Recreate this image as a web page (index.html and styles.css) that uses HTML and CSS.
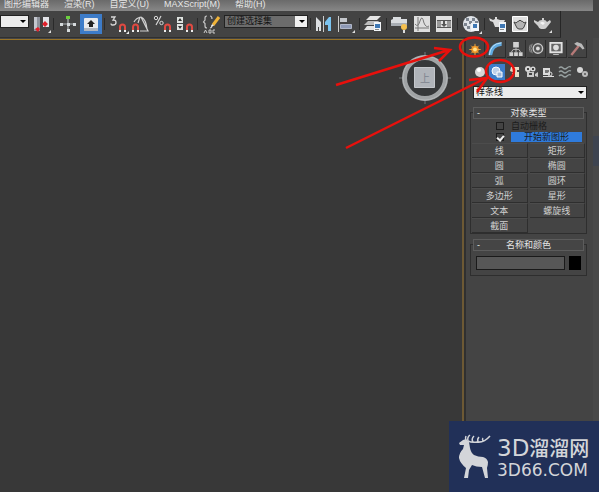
FILE: index.html
```html
<!DOCTYPE html>
<html lang="zh-CN">
<head>
    <meta charset="utf-8">
    <title>3ds Max</title>
    <link rel="stylesheet" href="styles.css">
</head>
<body>
    <div class="app">
        <nav class="menu-bar">
            <a href="#">图形编辑器</a>
            <a href="#">渲染(R)</a>
            <a href="#">自定义(U)</a>
            <a href="#">MAXScript(M)</a>
            <a href="#">帮助(H)</a>
        </nav>

        <div class="toolbar">
            <div class="select-box filter-box">
                <select aria-label="选择过滤器"><option></option></select>
            </div>
            <button class="tool" aria-label="书签">
                <svg viewBox="0 0 20 20"><path fill="#8f939c" d="M3 3h6v14H3z"/><path fill="#e3e4e8" d="M12 3h6v10h-6z"/><path fill="#c4c7ce" d="M3 3h3v12H3z"/><path fill="#e0202a" d="M4 15l3-2 2 2-2 3zM11 10l3-3 3 3-3 3z"/><path fill="#ddd" d="M20 16v3h-3z"/></svg>
            </button>
            <span class="sep"></span>
            <button class="tool" aria-label="操纵">
                <svg viewBox="0 0 20 20"><path stroke="#b4babd" stroke-width="1.2" d="M10 4v13M3 10h14"/><path fill="#d5dadc" d="M2 9h3v3H2zM15 9h3v3h-3zM9 15h3v3H9zM9 9h3v3H9z"/><path fill="#6ccf3e" d="M8 2h4v3H8z"/></svg>
            </button>
            <button class="tool active" aria-label="键盘快捷键覆盖">
                <svg viewBox="0 0 20 20"><rect x="3" y="4" width="14" height="13" rx="1" fill="#e8eaee"/><path fill="#aeb5c0" d="M3 14h14v3H3z"/><path fill="#222" d="M10 6l4 4h-2v3H8v-3H6z"/></svg>
            </button>
            <span class="sep"></span>
            <button class="tool" aria-label="捕捉开关">
                <svg viewBox="0 0 20 20"><path fill="none" stroke="#d8d8d8" stroke-width="1.3" d="M2 3h4L4 6q3 0 3 2.500T4 11Q2 11 2 9.500"/><path class="magnet" d="M11 17v-4a2.500 2.500 0 0 1 5 0v4"/><path fill="#eee" d="M10 16h2v2h-2zM15 16h2v2h-2zM20 17v3h-3z"/></svg>
            </button>
            <button class="tool" aria-label="角度捕捉">
                <svg viewBox="0 0 20 20"><path fill="none" stroke="#d0d0d0" stroke-width="1.200" d="M3 8Q5 4 10 3q5 2 6 12M10 3l7 14H9M9 3l-2 6"/><path class="magnet" d="M2 17v-4a2.500 2.500 0 0 1 5 0v4"/><path fill="#eee" d="M1 16h2v2H1zM6 16h2v2H6z"/></svg>
            </button>
            <button class="tool" aria-label="百分比捕捉">
                <svg viewBox="0 0 20 20"><path fill="none" stroke="#d8d8d8" stroke-width="1.200" d="M8 2L3 11"/><circle cx="3" cy="4" r="1.700" fill="none" stroke="#d8d8d8"/><circle cx="8.500" cy="9" r="1.700" fill="none" stroke="#d8d8d8"/><path class="magnet" d="M12 17v-4a2.500 2.500 0 0 1 5 0v4"/><path fill="#eee" d="M11 16h2v2h-2zM16 16h2v2h-2z"/></svg>
            </button>
            <button class="tool" aria-label="微调器捕捉">
                <svg viewBox="0 0 20 20"><path fill="#dfe3e0" d="M2 3h6v6H2zM2 10h6v6H2z"/><path fill="#333" d="M3 7l2-3 2 3zM3 12l2 3 2-3z"/><path class="magnet" d="M12 17v-4a2.500 2.500 0 0 1 5 0v4"/><path fill="#eee" d="M11 16h2v2h-2zM16 16h2v2h-2z"/></svg>
            </button>
            <span class="sep"></span>
            <button class="tool" aria-label="编辑命名选择集">
                <svg viewBox="0 0 20 20"><path fill="none" stroke="#c8c8c8" stroke-width="1.200" d="M5 2Q3 2 3 4v2L1.500 8 3 9.500V12q0 2 2 2M8 2q2 0 2 3M8 14q2 0 2-3"/><path stroke="#f0b43a" stroke-width="3" d="M17 3l-6 8"/><path fill="#eee" d="M9 13l1-3 2 1.500z"/><path fill="none" stroke="#ccc" d="M2 19l1.500-3 1.500 3M7 16v3h2v-3zM13 16h-2v3h2"/></svg>
            </button>
            <div class="select-box set-box">
                <select aria-label="命名选择集"><option>创建选择集</option></select>
            </div>
            <span class="sep"></span>
            <button class="tool" aria-label="镜像">
                <svg viewBox="0 0 20 20"><path fill="#dcdfe2" d="M1 3l5 5v9H4v-4H3v4H1z"/><path fill="#ccc" d="M8 2h1v16H8z"/><path fill="#7cc4f0" d="M16 3h-2l-4 5v3h3v6h3z"/></svg>
            </button>
            <button class="tool" aria-label="对齐">
                <svg viewBox="0 0 20 20"><path fill="#ccc" d="M1 2h1v16H1z"/><path fill="#c3c6cb" d="M3 4h7v4H3z"/><path fill="#8d98b4" stroke="#b0b6c8" d="M3.500 10.500h11v4h-11z"/><path fill="#ddd" d="M18 16v3h-3z"/></svg>
            </button>
            <span class="sep"></span>
            <button class="tool" aria-label="层管理器">
                <svg viewBox="0 0 20 20"><path fill="#e4e4e4" d="M6 2h11l-4 4H2z"/><path fill="#bdbdbd" d="M4 7h11l-3 4H0z"/><path fill="#e4e4e4" d="M3 12h10l-3 4H0z"/><path fill="#f2f5f8" d="M10 8h7v9h-7z"/><path fill="#3f78b4" d="M11 10h5v4h-5z"/><path fill="#888" d="M11 15h4v1h-4z"/></svg>
            </button>
            <span class="sep"></span>
            <button class="tool" aria-label="石墨建模工具">
                <svg viewBox="0 0 20 20"><path fill="#d9dcdf" d="M0 6l2-1V3h8v2h6v7H0z"/><path fill="#a8adb3" d="M0 9h16v3H0z"/><circle cx="13" cy="13" r="3" fill="#f5c04e"/><path fill="#ddd" d="M12 16h2v3h-2z"/></svg>
            </button>
            <button class="tool" aria-label="曲线编辑器">
                <svg viewBox="0 0 20 20"><path fill="#dedede" d="M1 2h16v16H1z"/><path fill="none" stroke="#777" d="M5 3v14M2 14h14M2 10q3 4 5-3t4 2q2 5 5 3"/></svg>
            </button>
            <button class="tool" aria-label="图解视图">
                <svg viewBox="0 0 20 20"><path fill="#e0e0e0" d="M1 2h16v16H1z"/><path fill="#555" d="M2 6h14v1H2zM2 13h14v1H2zM8 7h2v3h2l-3 3-3-3h2z"/><path fill="#999" d="M2 7h4v6H2zM12 7h4v6h-4z"/></svg>
            </button>
            <span class="sep"></span>
            <button class="tool" aria-label="材质编辑器">
                <svg viewBox="0 0 20 20"><circle cx="9" cy="10" r="8" fill="#dfe3e8"/><path fill="#7d8590" d="M4 4h3v3H4zM10 4h3v3h-3zM7 7h3v3H7zM13 7h3v3h-3zM2 9h3v3H2zM5 12h3v3H5z"/><path fill="#f2f5f8" d="M9 9h8v8H9z"/><path fill="#3f78b4" d="M11 10h4v4h-4z"/><path fill="#ddd" d="M20 17v3h-3z"/></svg>
            </button>
            <span class="sep"></span>
            <button class="tool" aria-label="渲染设置">
                <svg viewBox="0 0 20 20"><path fill="#dcdcdc" d="M0 4l4 2 2-1V3h2v2l3 1h5l-2 4-3 3H6L4 8 1 7z"/><path fill="#f2f5f8" d="M10 8h7v10h-7z"/><path fill="#3f78b4" d="M11 10h5v4h-5z"/><path fill="#888" d="M11 15h4v1h-4z"/></svg>
            </button>
            <button class="tool" aria-label="渲染帧窗口">
                <svg viewBox="0 0 20 20"><path fill="#dedede" stroke="#fff" d="M1.500 2.500h15v15h-15z"/><path fill="#b5b5b5" stroke="#444" d="M3 8l2 1q2-2 3-2l1-1 1 1q2 0 3 2l2-1-2 5q-1 2-2 2H8q-2 0-3-3z"/></svg>
            </button>
            <button class="tool" aria-label="渲染产品">
                <svg viewBox="0 0 20 20"><path fill="#cfcfcf" d="M1 6l4 2q1-2 4-2V4h2v2q2 0 3 2l3-2 1 2-4 5q-1 2-3 2H8q-2 0-3-3L1 8z"/><path fill="#f4f4f4" d="M7 9q2-2 5 0l-2 2z"/><path fill="#ddd" d="M19 16v3h-3z"/></svg>
            </button>
        </div>

        <div class="workspace">
            <main class="viewport">
                <svg class="view-cube" viewBox="0 0 52 52">
                    <path stroke="#55585a" stroke-width="2" d="M26 0v52M0 26h52"/>
                    <circle cx="26" cy="26" r="20.500" fill="#36383a" stroke="#a0a3a5" stroke-width="5"/>
                    <circle cx="26" cy="26" r="22" fill="none" stroke="#b6b9bb"/>
                    <path fill="#b0b4ba" stroke="#c4c7cc" d="M15.500 15.500h20v20h-20z"/>
                    <text x="26" y="30" text-anchor="middle">上</text>
                </svg>
            </main>

            <aside class="panel">
                <div class="tabs">
                    <button class="tab current" aria-label="创建">
                        <svg viewBox="0 0 18 18"><circle cx="9" cy="9" r="4" fill="#e88a1c"/><path stroke="#f0a840" d="M9 3v12M3 9h12M5 5l8 8M13 5l-8 8"/><circle cx="9" cy="9" r="2" fill="#ffe28a"/></svg>
                    </button>
                    <button class="tab" aria-label="修改">
                        <svg viewBox="0 0 18 18"><path fill="none" stroke="#5fa9e0" stroke-width="4" d="M4 16Q5 5 16 4"/><path fill="none" stroke="#c4e4fa" d="M3 16Q4 4 16 3"/></svg>
                    </button>
                    <button class="tab" aria-label="层次">
                        <svg viewBox="0 0 18 18"><path fill="#d2d2d2" d="M6 2h6v6H6zM2 13h4v4H2zM7 13h4v4H7zM12 13h4v4h-4z"/><path fill="none" stroke="#bbb" d="M9 8v5M4 13l2-3h6l2 3"/></svg>
                    </button>
                    <button class="tab" aria-label="运动">
                        <svg viewBox="0 0 18 18"><circle cx="11" cy="9" r="5" fill="#555" stroke="#c9c9c9" stroke-width="1.500"/><circle cx="11" cy="9" r="2" fill="#ddd"/><path fill="none" stroke="#999" d="M5 4q-3 5 0 10M3 5q-2 4 0 8"/></svg>
                    </button>
                    <button class="tab" aria-label="显示">
                        <svg viewBox="0 0 18 18"><path fill="#e2e2e2" d="M2 2h14v12H2zM6 15h6v1H6z"/><path fill="#666" d="M4 4h10v8H4z"/><circle cx="9" cy="8" r="3" fill="#ddd"/></svg>
                    </button>
                    <button class="tab" aria-label="工具">
                        <svg viewBox="0 0 18 18"><path stroke="#b77a78" stroke-width="2.500" d="M3 16l8-10"/><path fill="#b9b9b9" d="M6 4l3-2 5 2 3 5-2 1-3-3-3-1z"/></svg>
                    </button>
                </div>

                <div class="categories">
                    <button class="category" aria-label="几何体">
                        <svg viewBox="0 0 16 16"><circle cx="8" cy="8" r="5" fill="#d6d6d6"/><circle cx="7" cy="6" r="2" fill="#fff"/></svg>
                    </button>
                    <button class="category active" aria-label="图形">
                        <svg viewBox="0 0 16 16"><circle cx="7" cy="7" r="4" fill="#bdd0ea" stroke="#fff"/><path fill="#9fb6d8" stroke="#fff" d="M8 8h5v5H8z"/></svg>
                    </button>
                    <button class="category" aria-label="灯光">
                        <svg viewBox="0 0 16 16"><path fill="#e4dfc8" d="M5 3h8v3h-2v2h2v5H9V9L4 7z"/><path fill="#eee" d="M6 9h2v3H6z"/></svg>
                    </button>
                    <button class="category" aria-label="摄影机">
                        <svg viewBox="0 0 16 16"><circle cx="5" cy="5" r="3" fill="#d8d8d8"/><circle cx="10" cy="5" r="2.500" fill="#d8d8d8"/><path fill="#c8c8c8" d="M4 8h7v5H4zM12 10l3-2v5l-3-1z"/><path fill="#444" d="M4 4h2v2H4zM9 4h2v2H9zM6 9h3v2H6z"/></svg>
                    </button>
                    <button class="category" aria-label="辅助对象">
                        <svg viewBox="0 0 16 16"><path fill="#ddd" d="M3 4h7v7H3z"/><path fill="#777" d="M5 6h4v3H5z"/><circle cx="10" cy="10" r="2" fill="none" stroke="#ddd"/><path stroke="#ddd" d="M3 12.500h11"/></svg>
                    </button>
                    <button class="category" aria-label="空间扭曲">
                        <svg viewBox="0 0 16 16"><path fill="none" stroke="#9aa3a3" stroke-width="1.300" d="M2 4q2-2 4 0t4 0 4-1M2 8q2-2 4 0t4 0 4-1M2 12q2-2 4 0t4 0 4-1"/></svg>
                    </button>
                    <button class="category" aria-label="系统">
                        <svg viewBox="0 0 16 16"><circle cx="6" cy="6" r="3" fill="#d8d8d8"/><circle cx="11" cy="10" r="3" fill="#bbb"/><circle cx="11" cy="10" r="1" fill="#555"/></svg>
                    </button>
                </div>

                <div class="select-box type-box">
                    <select aria-label="图形类型"><option>样条线</option></select>
                </div>

                <section class="rollout">
                    <button class="rollout-title">对象类型</button>
                    <div class="options">
                        <input type="checkbox" id="auto-grid" disabled>
                        <label for="auto-grid">自动栅格</label>
                        <input type="checkbox" id="new-shape" checked>
                        <label for="new-shape" class="highlight">开始新图形</label>
                    </div>
                    <div class="shapes">
                        <button>线</button>
                        <button>矩形</button>
                        <button>圆</button>
                        <button>椭圆</button>
                        <button>弧</button>
                        <button>圆环</button>
                        <button>多边形</button>
                        <button>星形</button>
                        <button>文本</button>
                        <button>螺旋线</button>
                        <button>截面</button>
                    </div>
                </section>

                <section class="rollout">
                    <button class="rollout-title">名称和颜色</button>
                    <div class="name-row">
                        <input type="text" aria-label="名称">
                        <button class="swatch" aria-label="颜色"></button>
                    </div>
                </section>
            </aside>
            <div class="edge"></div>
        </div>

        <!-- red hint arrows over the create tab and the shapes button -->
        <svg class="hints" viewBox="330 30 190 125">
            <ellipse cx="474" cy="47" rx="14" ry="9.500"/>
            <ellipse cx="500" cy="71" rx="14" ry="11"/>
            <path d="M336 85L449 50M434 48l16 2-11 11"/>
            <path d="M346 148L486 78M469 80l18-2-10 14"/>
        </svg>

        <div class="logo">
            <svg class="deer" viewBox="0 0 34 46">
                <path fill="#d3d5d9" d="M2 9l4-3 3-1 3 3 1 6q1 5 4 7 4 2 9 2 4 1 5 5 0 3-1 6l1 10h-3l-3-11q-6 0-10-2l-3 5-1 8H7l2-10q-6-5-7-10 0-5 4-9l1-4-4 0z"/>
                <path fill="none" stroke="#d3d5d9" stroke-width="1.500" d="M9 6Q8 4 9 2M11 7q-1-4 2-6M11 7q4 2 9 1 7 1 13-6M16 8q-2-3 1-6M21 8q-1-3 1-5M26 7q-1-2 0-3"/>
            </svg>
            <div class="logo-text">
                <div class="logo-name"><span>3D</span>溜溜网</div>
                <div class="logo-site">3D66.COM</div>
            </div>
        </div>
    </div>
</body>
</html>
```

FILE: styles.css
```css
* {
    box-sizing: border-box;
}

body {
    margin: 0;
    background-color: #444;
    color: #d0d0d0;
    font-family: "Liberation Sans", "Noto Sans CJK SC", sans-serif;
    font-size: 9px;
}

button,
input,
select {
    margin: 0;
    padding: 0;
    border: none;
    font: inherit;
    color: inherit;
    background: none;
}

svg {
    display: block;
}

.app {
    position: relative;
    display: flex;
    flex-direction: column;
    min-height: 100vh;
    overflow: hidden;
}

/* Menu bar */
.menu-bar {
    display: flex;
    gap: 15px;
    height: 11px;
    padding-left: 4px;
    margin-right: 6px;
    line-height: 9px;
    white-space: nowrap;
    background: linear-gradient(#6a6a6a, #878787);
}

.menu-bar a {
    color: #e6e6e6;
    text-decoration: none;
}

/* Main toolbar */
.toolbar {
    display: flex;
    align-items: center;
    gap: 2px;
    height: 27px;
    padding-bottom: 1px;
    margin-right: 38px;
    border-right: 1px solid #262626;
    border-bottom: 1px solid #303030;
    background-color: #434343;
}

.tool {
    flex: 0 0 20px;
    height: 20px;
}

.tool svg {
    width: 20px;
    height: 20px;
}

.tool.active {
    flex-basis: 22px;
    padding: 0 1px;
    background-color: #3d7cc9;
}

.magnet {
    fill: none;
    stroke: #e04a42;
    stroke-width: 2;
}

.sep {
    flex: 0 0 3px;
    height: 12px;
    border-left: 1px solid #2a2a2a;
}

/* Drop-downs */
.select-box {
    position: relative;
    flex: none;
    height: 13px;
    background-color: #ececec;
}

.toolbar .select-box {
    margin-bottom: 4px;
}

.select-box select {
    display: block;
    width: 100%;
    height: 100%;
    padding-left: 2px;
    appearance: none;
    border: 1px solid #222;
    color: #111;
    line-height: 11px;
}

.select-box::after {
    content: "";
    position: absolute;
    top: 5px;
    right: 3px;
    border: 3px solid transparent;
    border-top-color: #000;
    pointer-events: none;
}

.filter-box {
    width: 29px;
}

.set-box {
    width: 84px;
    background: linear-gradient(to left, #f0f0f0 13px, #6c6c6c 13px);
}

.type-box {
    margin: 6px 6px 0 7px;
}

/* Workspace */
.workspace {
    flex: 1;
    display: flex;
}

.viewport {
    position: relative;
    flex: 1;
    margin-top: 1px;
    border-top: 1px solid #9a7426;
    border-right: 2px solid #6d5934;
    background-color: #383838;
}

.view-cube {
    position: absolute;
    top: 12px;
    right: 11px;
    width: 52px;
    height: 52px;
}

.view-cube text {
    fill: #7d848f;
    font-size: 10px;
}

/* Command panel */
.panel {
    flex: 0 0 129px;
    min-width: 0;
    padding-top: 2px;
    border-left: 2px solid #303030;
    background-color: #444;
}

.edge {
    flex: 0 0 6px;
    background: linear-gradient(#484848 98px, #3e4450 98px, #3e4450 128px, #484848 128px);
}

.tabs {
    display: flex;
    gap: 1px;
    height: 18px;
    margin-right: 6px;
}

.tab {
    flex: 1;
    border-right: 1px solid #2c2c2c;
    border-bottom: 1px solid #2c2c2c;
}

.tab.current {
    border-bottom: none;
}

.tab svg {
    width: 18px;
    height: 17px;
}

.categories {
    display: flex;
    gap: 1px;
    margin: 6px 0 0 6px;
}

.category {
    width: 16px;
    height: 16px;
}

.category.active {
    background-color: #3d7cc9;
}

.category svg {
    width: 16px;
    height: 16px;
}

/* Rollouts */
.rollout {
    margin: 13px 6px 0 4px;
    border: 1px solid #2e2e2e;
}

.rollout + .rollout {
    margin-top: 10px;
}

.rollout-title {
    position: relative;
    display: block;
    width: calc(100% - 4px);
    height: 12px;
    margin: -6px 2px 0;
    border: 1px solid #5c5c5c;
    background-color: #454545;
    color: #e4e4e4;
    line-height: 10px;
    text-align: center;
}

.rollout-title::before {
    content: "-";
    position: absolute;
    left: 3px;
}

.options {
    display: grid;
    grid-template-columns: 8px 1fr;
    grid-auto-rows: 11px;
    align-items: center;
    column-gap: 7px;
    margin: 1px 4px 1px 25px;
    line-height: 10px;
    color: #1c1c1c;
}

.options input {
    display: grid;
    place-items: center;
    appearance: none;
    width: 8px;
    height: 8px;
    border: 1px solid #1c1c1c;
}

/* tick mark */
.options input:checked::before {
    content: "";
    width: 3px;
    height: 5px;
    border: solid #f0f0f0;
    border-width: 0 2px 2px 0;
    transform: rotate(40deg);
}

.options .highlight {
    background-color: #2f7bdc;
    text-align: center;
}

.shapes {
    display: grid;
    grid-template-columns: 1fr 1fr;
    grid-auto-rows: 15px;
    column-gap: 2px;
    margin: 0 1px;
}

.shapes button {
    border-right: 1px solid #2e2e2e;
    border-bottom: 1px solid #2e2e2e;
    border-top: 1px solid #4c4c4c;
    line-height: 12px;
}

.name-row {
    display: flex;
    gap: 4px;
    padding: 5px;
}

.name-row input {
    flex: 1;
    width: 100%;
    min-width: 0;
    height: 14px;
    border: 1px solid #1a1a1a;
    background-color: #575757;
}

.swatch {
    flex: 0 0 12px;
    background-color: #000;
}

/* Hint arrows */
.hints {
    position: absolute;
    top: 30px;
    right: 79px;
    width: 190px;
    height: 125px;
    fill: none;
    stroke: #e8100c;
    stroke-width: 2.5;
    pointer-events: none;
}

/* Corner logo */
.logo {
    position: absolute;
    right: 0;
    bottom: 0;
    display: flex;
    align-items: center;
    gap: 6px;
    width: 150px;
    height: 71px;
    padding-left: 8px;
    background-color: #213058;
    color: #d3d5d9;
    white-space: nowrap;
}

.deer {
    flex: none;
    width: 34px;
    height: 46px;
}

.logo-name {
    display: flex;
    align-items: center;
    height: 26px;
    font-size: 20px;
    font-weight: 500;
}

.logo-name span {
    font-family: "DejaVu Sans", sans-serif;
    font-weight: 400;
    font-size: 23px;
}

.logo-site {
    font-family: "DejaVu Sans", sans-serif;
    font-weight: 400;
    font-size: 17px;
    line-height: 18px;
}
```
